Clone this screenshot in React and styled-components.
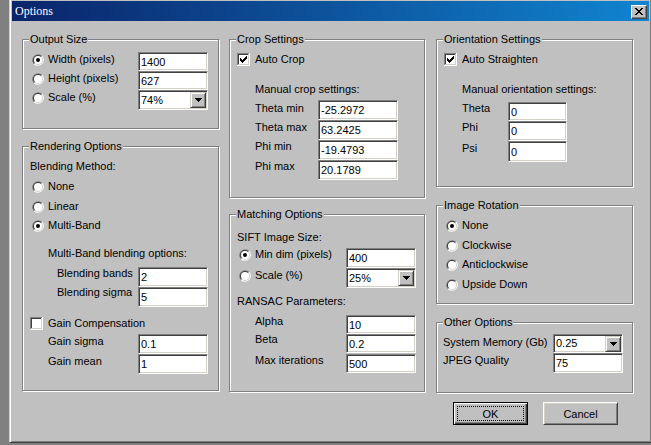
import React from 'react';
import styled, { createGlobalStyle, css } from 'styled-components';

const Global = createGlobalStyle`
  html, body { margin: 0; padding: 0; background: #808080; overflow: hidden; }
  body { width: 651px; height: 445px; font-family: "Liberation Sans", Arial, sans-serif; font-size: 11px; color: #000; }
`;

const Dialog = styled.div`
  box-sizing: border-box;
  margin: -2px 0 0 9px;
  width: 643px;
  height: 445px;
  background: #c0c0c0;
  border: 1px solid;
  border-color: #d4d0c8 #404040 #404040 #d4d0c8;
  box-shadow: inset 1px 1px 0 #fff, inset -1px -1px 0 #808080;
  padding: 2px;
  display: flex;
  flex-direction: column;
`;

const TitleBar = styled.div`
  height: 20px;
  flex: none;
  display: flex;
  align-items: center;
  justify-content: space-between;
  padding: 0 2px;
  background: linear-gradient(90deg, #0a246a 0%, #1084d0 100%);
`;

const TitleText = styled.span`
  font-family: "Liberation Serif", "Times New Roman", serif;
  font-size: 12px;
  color: #fff;
  margin-left: 1px;
`;

const CloseButton = styled.div`
  box-sizing: border-box;
  width: 16px;
  height: 14px;
  background: #c0c0c0;
  border: 1px solid;
  border-color: #fff #404040 #404040 #fff;
  box-shadow: inset -1px -1px 0 #808080;
  display: flex;
  align-items: center;
  justify-content: center;
  margin-top: 1px;
`;

const Content = styled.div`
  display: flex;
  align-items: flex-start;
  padding: 18px 0 0 10px;
`;

const Column = styled.div`
  display: flex;
  flex-direction: column;
  flex: none;
  width: ${p => p.$w}px;
  margin-left: ${p => p.$ml || 0}px;
`;

const Group = styled.div`
  position: relative;
  box-sizing: border-box;
  height: ${p => p.$h}px;
  margin-top: ${p => p.$mt || 0}px;
  border: 1px solid #808080;
  box-shadow: inset 1px 1px 0 #fff, 1px 1px 0 #fff;
  padding-left: ${p => p.$pl || 0}px;
  display: flex;
  flex-direction: column;
  align-items: flex-start;
`;

const Legend = styled.span`
  position: absolute;
  top: -7px;
  left: 6px;
  padding: 0 1px;
  line-height: 13px;
  background: #c0c0c0;
  white-space: nowrap;
`;

const Text = styled.div`
  line-height: 13px;
  margin-top: ${p => p.$mt || 0}px;
  margin-left: ${p => p.$ml || 0}px;
  white-space: nowrap;
`;

const FieldRow = styled.div`
  display: flex;
  align-items: flex-start;
  height: ${p => p.$h}px;
  margin-top: ${p => p.$mt || 0}px;
  margin-left: ${p => p.$ml || 0}px;
`;

const FieldLabel = styled.div`
  flex: none;
  width: ${p => p.$w}px;
  line-height: 13px;
  margin-top: ${p => p.$dy || 0}px;
  white-space: nowrap;
  display: flex;
`;

const sunken = css`
  box-sizing: border-box;
  background: #fff;
  border: 1px solid;
  border-color: #808080 #fff #fff #808080;
  box-shadow: inset 1px 1px 0 #404040, inset -1px -1px 0 #d4d0c8;
`;

const Input = styled.input`
  ${sunken};
  width: ${p => p.$w}px;
  height: 100%;
  margin: 0;
  padding: 0 0 0 2px;
  font: 11px "Liberation Sans", Arial, sans-serif;
  color: #000;
  outline: none;
`;

const ComboBox = styled.div`
  ${sunken};
  width: ${p => p.$w}px;
  height: 100%;
  display: flex;
  align-items: center;
  padding: 0 1px 0 2px;
`;

const ComboValue = styled.span`
  flex: 1;
  line-height: 13px;
`;

const DropButton = styled.div`
  box-sizing: border-box;
  width: 16px;
  height: 16px;
  background: #c0c0c0;
  border: 1px solid;
  border-color: #d4d0c8 #404040 #404040 #d4d0c8;
  box-shadow: inset 1px 1px 0 #fff, inset -1px -1px 0 #808080;
  display: flex;
  align-items: center;
  justify-content: center;
`;

const ChoiceLabel = styled.label`
  display: inline-flex;
  align-items: center;
  gap: ${p => p.$gap}px;
  height: 13px;
  line-height: 13px;
  white-space: nowrap;
  margin-top: ${p => p.$mt || 0}px;
  margin-left: ${p => p.$ml || 0}px;
`;

const ButtonRow = styled.div`
  display: flex;
  gap: 15px;
  margin-top: 9px;
  padding-left: 17px;
`;

const Button = styled.button`
  position: relative;
  box-sizing: border-box;
  width: 75px;
  height: 23px;
  padding: 0;
  background: #c0c0c0;
  font: 11px "Liberation Sans", Arial, sans-serif;
  color: #000;
  border: 1px solid;
  border-color: #fff #404040 #404040 #fff;
  box-shadow: inset 1px 1px 0 #d4d0c8, inset -1px -1px 0 #808080;
  ${p => p.$default && css`
    border-color: #000;
    box-shadow: inset 1px 1px 0 #fff, inset -1px -1px 0 #404040, inset -2px -2px 0 #808080;
    &::after {
      content: "";
      position: absolute;
      inset: 3px 3px 3px 3px;
      border: 1px dotted #000;
    }
  `}
`;

const RadioIcon = ({ checked }) => (
  <svg width="12" height="12" viewBox="0 0 12 12">
    <path d="M10.24 1.76A6 6 0 0 0 1.76 10.24Z" fill="#808080" />
    <path d="M1.76 10.24A6 6 0 0 0 10.24 1.76Z" fill="#fff" />
    <path d="M9.54 2.46A5 5 0 0 0 2.46 9.54Z" fill="#404040" />
    <path d="M2.46 9.54A5 5 0 0 0 9.54 2.46Z" fill="#d4d0c8" />
    <circle cx="6" cy="6" r="4" fill="#fff" />
    {checked && <circle cx="6" cy="6" r="2" fill="#000" />}
  </svg>
);

const CheckIcon = ({ checked }) => (
  <svg width="13" height="13" viewBox="0 0 13 13" shapeRendering="crispEdges">
    <rect x="0" y="0" width="13" height="13" fill="#fff" />
    <path d="M0 0h12v1H1v11H0z" fill="#808080" />
    <path d="M1 1h10v1H2v9H1z" fill="#404040" />
    <path d="M11 1h1v11H1v-1h10z" fill="#d4d0c8" />
    {checked && (
      <path
        d="M9 3h1v1h-1z M8 4h2v1h-2z M3 5h1v1h-1z M7 5h3v1h-3z M3 6h2v1h-2z M6 6h3v1h-3z M3 7h5v1h-5z M4 8h3v1h-3z M5 9h1v1h-1z"
        fill="#000"
      />
    )}
  </svg>
);

const Arrow = () => (
  <svg width="7" height="4" viewBox="0 0 7 4" shapeRendering="crispEdges">
    <path d="M0 0h7v1H0z M1 1h5v1H1z M2 2h3v1H2z M3 3h1v1H3z" fill="#000" />
  </svg>
);

const CloseGlyph = () => (
  <svg width="8" height="7" viewBox="0 0 8 7" shapeRendering="crispEdges">
    <path
      d="M0 0h2v1H0z M6 0h2v1H6z M1 1h2v1H1z M5 1h2v1H5z M2 2h4v1H2z M3 3h2v1H3z M2 4h4v1H2z M1 5h2v1H1z M5 5h2v1H5z M0 6h2v1H0z M6 6h2v1H6z"
      fill="#000"
    />
  </svg>
);

const Radio = ({ checked, children, mt, ml }) => (
  <ChoiceLabel $gap={4} $mt={mt} $ml={ml}>
    <RadioIcon checked={checked} />
    <span>{children}</span>
  </ChoiceLabel>
);

const Check = ({ checked, children, mt, ml }) => (
  <ChoiceLabel $gap={5} $mt={mt} $ml={ml}>
    <CheckIcon checked={checked} />
    <span>{children}</span>
  </ChoiceLabel>
);

const Combo = ({ w, value }) => (
  <ComboBox $w={w}>
    <ComboValue>{value}</ComboValue>
    <DropButton><Arrow /></DropButton>
  </ComboBox>
);

const Field = ({ h, mt, ml, lw, dy, label, value, w, combo }) => (
  <FieldRow $h={h} $mt={mt} $ml={ml}>
    <FieldLabel $w={lw} $dy={dy}>{label}</FieldLabel>
    {combo ? <Combo w={w} value={value} /> : <Input $w={w} readOnly value={value} />}
  </FieldRow>
);

export default function App() {
  return (
    <>
      <Global />
      <Dialog>
        <TitleBar>
          <TitleText>Options</TitleText>
          <CloseButton><CloseGlyph /></CloseButton>
        </TitleBar>
        <Content>
          <Column $w={197}>
            <Group $h={90} $pl={9}>
              <Legend>Output Size</Legend>
              <Field h={19} mt={12} lw={106} dy={1} label={<Radio checked>Width (pixels)</Radio>} w={70} value="1400" />
              <Field h={19} lw={106} dy={1} label={<Radio>Height (pixels)</Radio>} w={70} value="627" />
              <Field h={20} lw={106} dy={1} label={<Radio>Scale (%)</Radio>} w={70} value="74%" combo />
            </Group>
            <Group $h={245} $mt={17} $pl={7}>
              <Legend>Rendering Options</Legend>
              <Text $mt={13}>Blending Method:</Text>
              <Radio mt={7} ml={2}>None</Radio>
              <Radio mt={7} ml={2}>Linear</Radio>
              <Radio mt={6} ml={2} checked>Multi-Band</Radio>
              <Text $mt={15} $ml={18}>Multi-Band blending options:</Text>
              <Field h={20} mt={7} ml={27} lw={81} dy={0} label="Blending bands" w={70} value="2" />
              <Field h={20} ml={27} lw={81} dy={-1} label="Blending sigma" w={70} value="5" />
              <Check mt={10}>Gain Compensation</Check>
              <Field h={20} mt={4} ml={18} lw={90} dy={1} label="Gain sigma" w={70} value="0.1" />
              <Field h={20} ml={18} lw={90} dy={1} label="Gain mean" w={70} value="1" />
            </Group>
          </Column>
          <Column $w={196} $ml={10}>
            <Group $h={159} $pl={7}>
              <Legend>Crop Settings</Legend>
              <Check mt={13} checked>Auto Crop</Check>
              <Text $mt={17} $ml={18}>Manual crop settings:</Text>
              <Field h={20} mt={4} ml={18} lw={63} dy={2} label="Theta min" w={80} value="-25.2972" />
              <Field h={20} ml={18} lw={63} dy={1} label="Theta max" w={80} value="63.2425" />
              <Field h={20} ml={18} lw={63} dy={0} label="Phi min" w={80} value="-19.4793" />
              <Field h={20} ml={18} lw={63} dy={0} label="Phi max" w={80} value="20.1789" />
            </Group>
            <Group $h={178} $mt={16} $pl={7}>
              <Legend>Matching Options</Legend>
              <Text $mt={16}>SIFT Image Size:</Text>
              <Field h={20} mt={4} ml={2} lw={107} dy={0} label={<Radio checked>Min dim (pixels)</Radio>} w={70} value="400" />
              <Field h={20} ml={2} lw={107} dy={1} label={<Radio>Scale (%)</Radio>} w={70} value="25%" combo />
              <Text $mt={7}>RANSAC Parameters:</Text>
              <Field h={19} mt={7} ml={18} lw={91} dy={0} label="Alpha" w={70} value="10" />
              <Field h={19} ml={18} lw={91} dy={-1} label="Beta" w={70} value="0.2" />
              <Field h={19} mt={1} ml={18} lw={91} dy={0} label="Max iterations" w={70} value="500" />
            </Group>
          </Column>
          <Column $w={197} $ml={11}>
            <Group $h={148} $pl={7}>
              <Legend>Orientation Settings</Legend>
              <Check mt={13} checked>Auto Straighten</Check>
              <Text $mt={17} $ml={18}>Manual orientation settings:</Text>
              <Field h={19} mt={6} ml={18} lw={46} dy={0} label="Theta" w={59} value="0" />
              <Field h={20} ml={18} lw={46} dy={0} label="Phi" w={59} value="0" />
              <Field h={21} ml={18} lw={46} dy={1} label="Psi" w={59} value="0" />
            </Group>
            <Group $h={99} $mt={18} $pl={9}>
              <Legend>Image Rotation</Legend>
              <Radio mt={13} checked>None</Radio>
              <Radio mt={7}>Clockwise</Radio>
              <Radio mt={6}>Anticlockwise</Radio>
              <Radio mt={7}>Upside Down</Radio>
            </Group>
            <Group $h={71} $mt={18} $pl={6}>
              <Legend>Other Options</Legend>
              <Field h={19} mt={11} lw={110} dy={2} label="System Memory (Gb)" w={70} value="0.25" combo />
              <Field h={20} lw={110} dy={1} label="JPEG Quality" w={70} value="75" />
            </Group>
            <ButtonRow>
              <Button $default>OK</Button>
              <Button>Cancel</Button>
            </ButtonRow>
          </Column>
        </Content>
      </Dialog>
    </>
  );
}
